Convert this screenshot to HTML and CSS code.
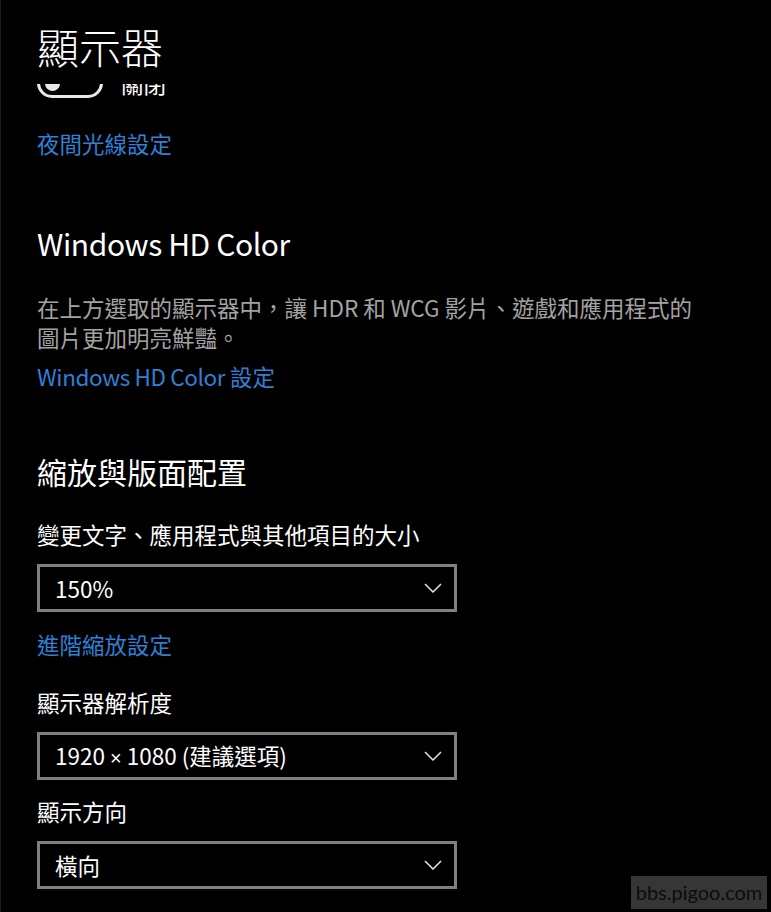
FILE: index.html
```html
<!DOCTYPE html>
<html lang="zh-Hant">
<head>
<meta charset="utf-8">
<title>顯示器</title>
<link rel="stylesheet" href="styles.css">
</head>
<body>
<div class="page">
  <header class="header">
    <h1 class="title">顯示器</h1>
  </header>
  <main class="scroll">
    <div class="content">
      <div class="toggle-row">
        <span class="toggle"><span class="knob"></span></span>
        <span class="toggle-label">關閉</span>
      </div>
      <a class="link link-night" href="#">夜間光線設定</a>

      <h2 class="heading heading-hd"><span class="latin">Windows HD Color</span></h2>
      <p class="desc">在上方選取的顯示器中，讓 HDR 和 WCG 影片、遊戲和應用程式的<br>圖片更加明亮鮮豔。</p>
      <a class="link link-hd" href="#"><span class="latin">Windows HD Color</span> 設定</a>

      <h2 class="heading heading-scale">縮放與版面配置</h2>
      <div class="label label-size">變更文字、應用程式與其他項目的大小</div>
      <div class="select">
        <span class="select-value">150%</span>
        <svg class="chevron" width="18" height="10" viewBox="0 0 18 10"><polyline points="1,1 9,9 17,1" fill="none" stroke="#e6e6e6" stroke-width="1.5"/></svg>
      </div>
      <a class="link link-adv" href="#">進階縮放設定</a>

      <div class="label label-res">顯示器解析度</div>
      <div class="select">
        <span class="select-value">1920 <span class="times">×</span> 1080 (建議選項)</span>
        <svg class="chevron" width="18" height="10" viewBox="0 0 18 10"><polyline points="1,1 9,9 17,1" fill="none" stroke="#e6e6e6" stroke-width="1.5"/></svg>
      </div>

      <div class="label label-orient">顯示方向</div>
      <div class="select">
        <span class="select-value">橫向</span>
        <svg class="chevron" width="18" height="10" viewBox="0 0 18 10"><polyline points="1,1 9,9 17,1" fill="none" stroke="#e6e6e6" stroke-width="1.5"/></svg>
      </div>
    </div>
  </main>
  <div class="watermark">bbs.pigoo.com</div>
</div>
</body>
</html>
```
FILE: styles.css
```css
* { box-sizing: border-box; }
html, body { margin: 0; padding: 0; background: #000; }
body {
  font-family: "Noto Sans CJK TC", "Noto Sans CJK SC", sans-serif;
  color: #fff;
}
.page {
  position: relative;
  width: 771px;
  height: 912px;
  overflow: hidden;
  display: flex;
  flex-direction: column;
  background: #000;
  border-left: 1px solid #1e1e1e;
}
.header {
  height: 84px;
  flex: none;
  padding: 18px 0 0 36px;
}
.title {
  margin: 0;
  font-size: 42px;
  line-height: 56px;
  font-weight: 300;
  color: #fff;
}
.scroll {
  flex: 1;
  overflow: hidden;
}
.content {
  margin-top: -16px;
  padding-left: 36px;
  display: flex;
  flex-direction: column;
  align-items: flex-start;
}
.toggle-row {
  display: flex;
  align-items: center;
  height: 30px;
  gap: 18px;
}
.toggle {
  width: 66px;
  height: 30px;
  border: 3px solid #e8e8e8;
  border-radius: 15px;
  display: flex;
  align-items: center;
  padding-left: 5px;
}
.knob {
  width: 15px;
  height: 15px;
  border-radius: 50%;
  background: #e8e8e8;
}
.toggle-label {
  font-size: 22.5px;
  line-height: 30px;
}
.latin { letter-spacing: -0.4px; }
.link {
  font-size: 22.5px;
  line-height: 30px;
  color: #2f80d6;
  text-decoration: none;
}
.link-night { margin-top: 30px; }
.heading {
  margin: 0;
  font-size: 30px;
  line-height: 40px;
  font-weight: 400;
  color: #fff;
}
.heading-hd { margin-top: 65px; }
.desc {
  margin: 29px 0 0;
  font-size: 22.5px;
  line-height: 30px;
  color: #a3a3a3;
}
.link-hd { margin-top: 9px; }
.heading-scale { margin-top: 60px; }
.label {
  font-size: 22.5px;
  line-height: 30px;
  color: #fff;
}
.label-size { margin-top: 28px; }
.label-res { margin-top: 28px; }
.label-orient { margin-top: 16px; }
.select {
  margin-top: 15px;
  width: 420px;
  height: 48px;
  border: 3px solid #7f7f7f;
  display: flex;
  align-items: center;
  justify-content: space-between;
  padding: 0 12px 0 15px;
}
.select-value {
  font-size: 22.5px;
  line-height: 30px;
  color: #fff;
}
.times {
  font-family: "Liberation Sans", "DejaVu Sans", sans-serif;
  font-size: 20px;
}
.chevron { display: block; }
.link-adv { margin-top: 17px; }
.watermark {
  position: absolute;
  left: 630px;
  top: 876px;
  width: 136px;
  height: 33px;
  background: #363636;
  color: #0c0c0c;
  font-family: Lato, "DejaVu Sans", sans-serif;
  font-size: 20px;
  line-height: 33px;
  text-align: center;
}
```
